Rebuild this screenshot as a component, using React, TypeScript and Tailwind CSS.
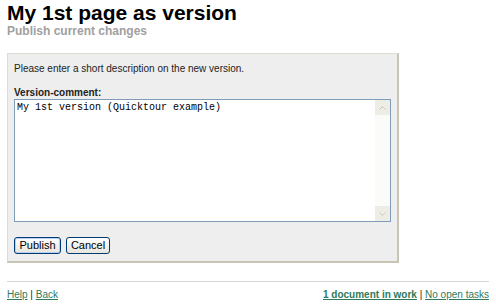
export default function App() {
  return (
    <div className="w-[496px] h-[308px] bg-white px-[7px] pt-[1px] font-['Liberation_Sans',Arial,sans-serif] text-[10px] text-[#222]">
      <h1 className="text-[21px] font-bold leading-[24px] text-black">My 1st page as version</h1>
      <h2 className="text-[12px] font-bold leading-[13px] text-[#a0a0a0]">Publish current changes</h2>

      <div className="mt-[15px] w-[392px] h-[210px] bg-[#eeeeee] border border-t-[#dedbd0] border-l-[#dedbd0] border-r-[#c9c5b4] border-b-[#c9c5b4] border-r-2 border-b-2 px-[6px] pt-[9px]">
        <p className="leading-[12px]">Please enter a short description on the new version.</p>
        <label className="block mt-[12px] font-bold leading-[12px] text-[#222]">Version-comment:</label>
        <div className="flex h-[123px] border border-[#7f9db9] bg-white">
          <div className="flex-1 px-[2px] pt-[2px] font-['Liberation_Mono',monospace] text-[10px] leading-[12px] text-black">
            My 1st version (Quicktour example)
          </div>
          <div className="w-[15px] flex flex-col justify-between bg-[#fbfbf9]">
            <div className="h-[15px] bg-[#eeede5] flex items-center justify-center">
              <svg width="7" height="4" viewBox="0 0 7 4"><path d="M0.5 3.5 L3.5 0.5 L6.5 3.5" fill="none" stroke="#c9c7ba" strokeWidth="1" /></svg>
            </div>
            <div className="h-[15px] bg-[#eeede5] flex items-center justify-center">
              <svg width="7" height="4" viewBox="0 0 7 4"><path d="M0.5 0.5 L3.5 3.5 L6.5 0.5" fill="none" stroke="#c9c7ba" strokeWidth="1" /></svg>
            </div>
          </div>
        </div>
        <div className="flex gap-[5px] mt-[15px]">
          <button className="h-[17px] w-[47px] border border-[#003c74] rounded-[3px] bg-gradient-to-b from-white to-[#e6e5de] shadow-[inset_0_0_0_1px_#b8cff5] text-[11px] leading-[13px] text-black">Publish</button>
          <button className="h-[17px] w-[44px] border border-[#003c74] rounded-[3px] bg-gradient-to-b from-white to-[#e6e5de] text-[11px] leading-[13px] text-black">Cancel</button>
        </div>
      </div>

      <div className="mt-[18px] border-t border-[#d6d6d6] w-[482px] flex justify-between pt-[6px] leading-[13px] text-[10px]">
        <div>
          <a className="underline text-[#2f7a5a]">Help</a> | <a className="underline text-[#2f7a5a]">Back</a>
        </div>
        <div>
          <a className="underline font-bold text-[#2f7a5a]">1 document in work</a> | <a className="underline text-[#2f7a5a]">No open tasks</a>
        </div>
      </div>
    </div>
  );
}
